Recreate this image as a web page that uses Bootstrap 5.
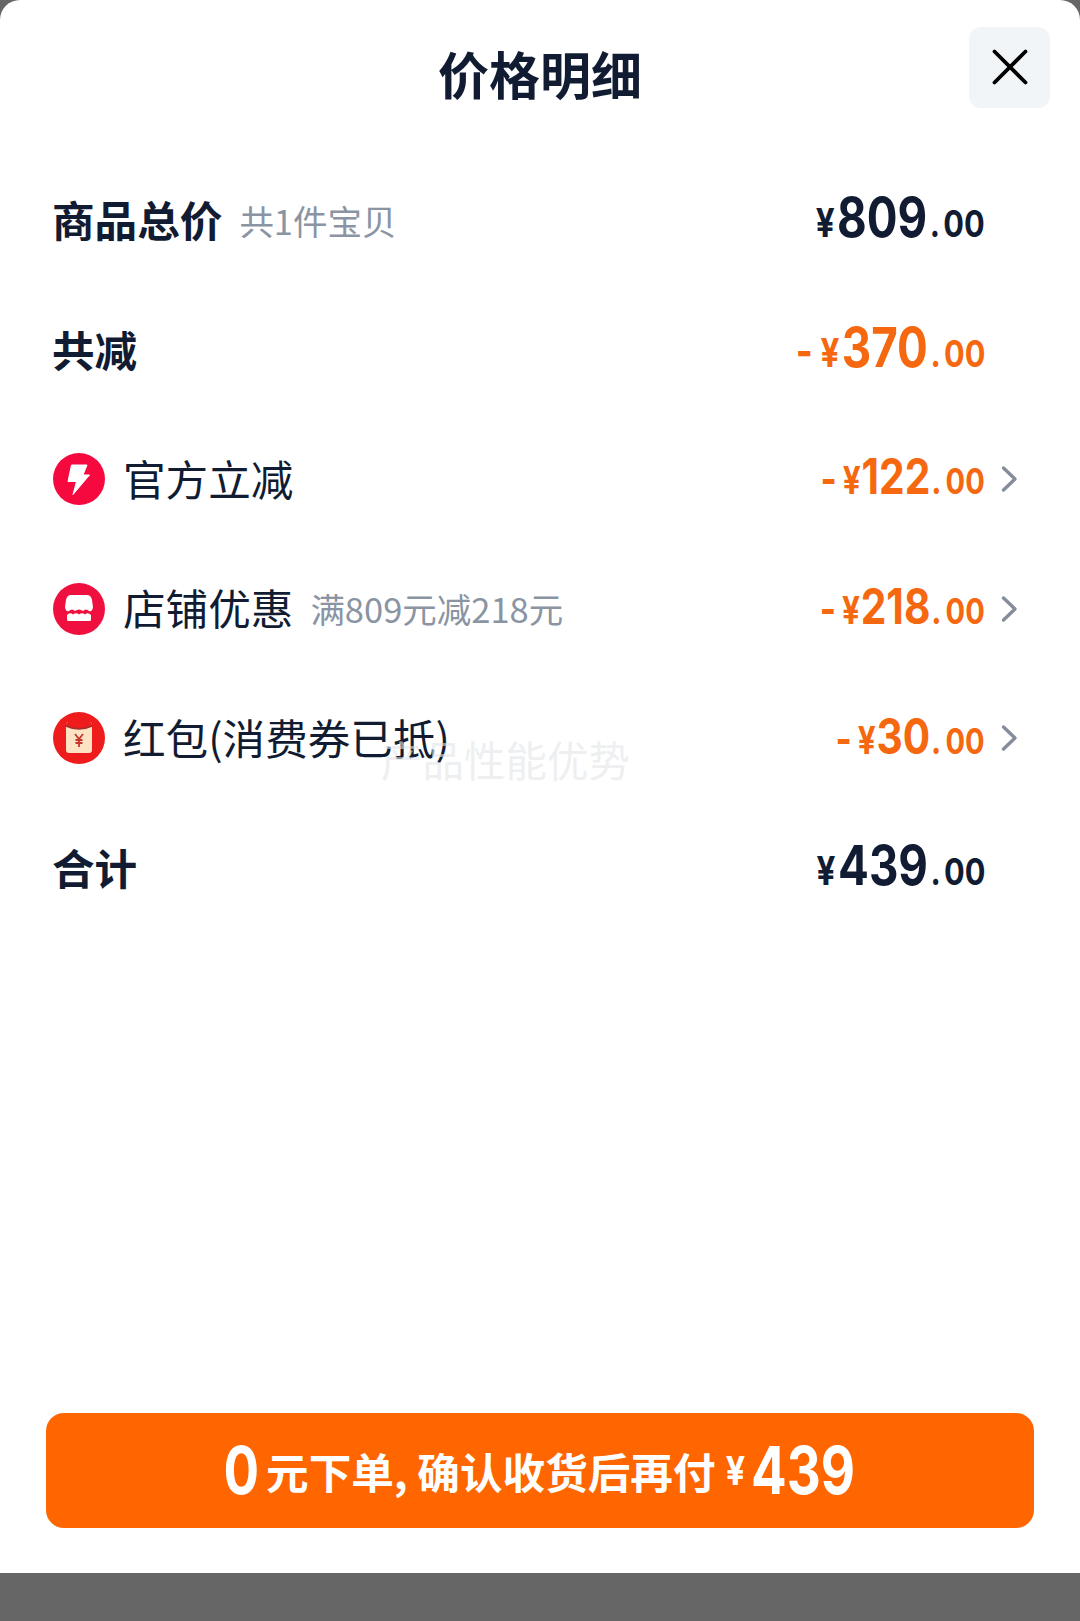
<!DOCTYPE html>
<html lang="zh-CN">
<head>
    <meta charset="UTF-8">
    <title>价格明细</title>
    <meta name="viewport" content="width=device-width, initial-scale=1">
    <link href="https://cdn.jsdelivr.net/npm/bootstrap@5.3.3/dist/css/bootstrap.min.css" rel="stylesheet">
    <script src="https://cdn.jsdelivr.net/npm/bootstrap@5.3.3/dist/js/bootstrap.bundle.min.js"></script>
    <style>
        body { background: #666; font-family: "Noto Sans CJK SC", sans-serif; color: #111c32; }
        .sheet { height: 1573px; background: #fff; border-radius: 20px 20px 0 0; position: relative; }
        .sheet-head { height: 155px; position: relative; }
        .sheet-title { font-size: 51px; font-weight: 700; line-height: 1; margin: 0; padding-top: 48px; text-align: center; }
        .close-box { position: absolute; right: 30px; top: 27px; width: 81px; height: 81px; background: #f2f5f8; border: 0; border-radius: 12px; padding: 0 0 2px; }
        .price-row { height: 129.6px; padding: 0 62px 0 53px; }
        .label-main { font-size: 42.6px; line-height: 1; padding-bottom: 2px; }
        .label-bold { font-weight: 700; margin-left: -1px; padding-bottom: 1px; }
        .label-note { font-size: 34.5px; line-height: 1; color: #8a94a3; margin-left: 17px; }
        .row-icon { width: 52px; height: 52px; margin-right: 18px; flex: none; }
        .amount { display: inline-block; font-family: Inter, sans-serif; font-weight: 700; line-height: 1; white-space: nowrap; transform: scaleX(.83); transform-origin: right center; padding-bottom: 4px; }
        .amount .minus { font-size: 44px; margin-right: 9px; }
        .amount .yen { font-size: 40px; margin-right: 3px; }
        .amount .whole { font-size: 55px; }
        .amount .cents { font-size: 37px; }
        .amount .dot { font-size: 37px; margin: 0 4px 0 3px; }
        .amount-small .minus { font-size: 42px; margin-right: 7px; }
        .amount-small .yen { font-size: 38px; margin-right: 1px; }
        .amount-small .whole { font-size: 49px; }
        .amount-small .cents { font-size: 35px; }
        .amount-small .dot { margin: 0 5px 0 1px; }
        .text-deal { color: #f5680f; }
        .chev-slot { width: 33px; height: 34px; flex: none; }
        .watermark { position: absolute; left: 381px; top: 735px; font-size: 41.5px; line-height: 1.2; color: rgba(226, 229, 233, .6); pointer-events: none; }
        .pay-btn { margin: 0 46px 45px; height: 115px; background: #ff6600; border: 0; border-radius: 18px; color: #fff; font-weight: 700; font-size: 42.6px; }
        .pay-btn:hover { background: #ff6600; color: #fff; }
        .pay-num { display: inline-block; font-family: Inter, sans-serif; font-weight: 700; font-size: 66px; line-height: 1; transform: scaleX(.8); padding-bottom: 1px; }
        .pay-zero { margin: 0 3px 0 -4px; }
        .pay-total { margin: 0 -11px 0 -11px; }
        .pay-yen { font-family: Inter, sans-serif; font-size: 40px; font-weight: 700; display: inline-block; transform: scaleX(.85); margin: 0 3px 0 8px; }
    </style>
</head>
<body>
    <div class="sheet d-flex flex-column">
        <div class="sheet-head">
            <h1 class="sheet-title">价格明细</h1>
            <button type="button" class="close-box d-flex align-items-center justify-content-center" aria-label="关闭">
                <svg width="36" height="36" viewBox="0 0 36 36"><path d="M2.5 2.5 L33.5 33.5 M33.5 2.5 L2.5 33.5" stroke="#000" stroke-width="3.8" stroke-linecap="round" fill="none"/></svg>
            </button>
        </div>

        <div class="price-row d-flex align-items-center justify-content-between">
            <div class="d-flex align-items-center">
                <span class="label-main label-bold">商品总价</span>
                <span class="label-note">共1件宝贝</span>
            </div>
            <div class="d-flex align-items-center">
                <span class="amount"><span class="yen">¥</span><span class="whole">809</span><span class="dot">.</span><span class="cents">00</span></span>
                <span class="chev-slot"></span>
            </div>
        </div>

        <div class="price-row d-flex align-items-center justify-content-between">
            <span class="label-main label-bold">共减</span>
            <div class="d-flex align-items-center">
                <span class="amount text-deal"><span class="minus">-</span><span class="yen">¥</span><span class="whole">370</span><span class="dot">.</span><span class="cents">00</span></span>
                <span class="chev-slot"></span>
            </div>
        </div>

        <div class="price-row d-flex align-items-center justify-content-between">
            <div class="d-flex align-items-center">
                <svg class="row-icon" viewBox="0 0 52 52"><circle cx="26" cy="26" r="26" fill="#f5093f"/><path d="M18.5 12 L34 12 L30 22 L36.5 22 L20 41.5 L23.5 28.5 L15 28.5 Z" fill="#fff" stroke="#fff" stroke-width="1" stroke-linejoin="round"/></svg>
                <span class="label-main">官方立减</span>
            </div>
            <div class="d-flex align-items-center">
                <span class="amount amount-small text-deal"><span class="minus">-</span><span class="yen">¥</span><span class="whole">122</span><span class="dot">.</span><span class="cents">00</span></span>
                <span class="chev-slot d-flex align-items-center justify-content-end"><svg width="17" height="28" viewBox="0 0 17 28"><path d="M2.5 3 L14 14 L2.5 25" stroke="#858d9b" stroke-width="3.4" stroke-linecap="round" stroke-linejoin="round" fill="none"/></svg></span>
            </div>
        </div>

        <div class="price-row d-flex align-items-center justify-content-between">
            <div class="d-flex align-items-center">
                <svg class="row-icon" viewBox="0 0 52 52"><circle cx="26" cy="26" r="26" fill="#f0103f"/><path d="M18 12 L34 12 Q38 12 39 17 L40 24 Q39.5 29 36 28 Q33 25 30 28 Q26 25 22 28 Q19 25 16 28 Q12.5 29 12 24 L13 17 Q14 12 18 12 Z" fill="#fff"/><path d="M14 32 Q17 29 20 31.5 Q23 29 26 31.5 Q29 29 32 31.5 Q35 29 38 32 L38 36.5 Q38 38 36.5 38 L15.5 38 Q14 38 14 36.5 Z" fill="#fff"/></svg>
                <span class="label-main">店铺优惠</span>
                <span class="label-note">满809元减218元</span>
            </div>
            <div class="d-flex align-items-center">
                <span class="amount amount-small text-deal"><span class="minus">-</span><span class="yen">¥</span><span class="whole">218</span><span class="dot">.</span><span class="cents">00</span></span>
                <span class="chev-slot d-flex align-items-center justify-content-end"><svg width="17" height="28" viewBox="0 0 17 28"><path d="M2.5 3 L14 14 L2.5 25" stroke="#858d9b" stroke-width="3.4" stroke-linecap="round" stroke-linejoin="round" fill="none"/></svg></span>
            </div>
        </div>

        <div class="price-row d-flex align-items-center justify-content-between">
            <div class="d-flex align-items-center">
                <svg class="row-icon" viewBox="0 0 52 52"><circle cx="26" cy="26" r="26" fill="#ee1c1c"/><rect x="13" y="10" width="26" height="31" rx="3" fill="#fde3c4"/><path d="M13 13 Q13 10 16 10 L36 10 Q39 10 39 13 L39 14 Q26 20 13 14 Z" fill="#ee1c1c"/><path d="M13 14 Q26 20 39 14" stroke="#a8302a" stroke-width="1.4" fill="none"/><path d="M22 22 L26 27 L30 22 M26 27 L26 35 M22.5 28 L29.5 28 M22.5 31 L29.5 31" stroke="#c8352c" stroke-width="1.8" fill="none"/></svg>
                <span class="label-main">红包(消费券已抵)</span>
            </div>
            <div class="d-flex align-items-center">
                <span class="amount amount-small text-deal"><span class="minus">-</span><span class="yen">¥</span><span class="whole">30</span><span class="dot">.</span><span class="cents">00</span></span>
                <span class="chev-slot d-flex align-items-center justify-content-end"><svg width="17" height="28" viewBox="0 0 17 28"><path d="M2.5 3 L14 14 L2.5 25" stroke="#858d9b" stroke-width="3.4" stroke-linecap="round" stroke-linejoin="round" fill="none"/></svg></span>
            </div>
        </div>

        <div class="price-row d-flex align-items-center justify-content-between">
            <span class="label-main label-bold">合计</span>
            <div class="d-flex align-items-center">
                <span class="amount"><span class="yen">¥</span><span class="whole">439</span><span class="dot">.</span><span class="cents">00</span></span>
                <span class="chev-slot"></span>
            </div>
        </div>

        <div class="watermark">产品性能优势</div>

        <button type="button" class="btn pay-btn mt-auto d-flex align-items-center justify-content-center">
            <span class="pay-num pay-zero">0</span>元下单, 确认收货后再付<span class="pay-yen">¥</span><span class="pay-num pay-total">439</span>
        </button>
    </div>
</body>
</html>
